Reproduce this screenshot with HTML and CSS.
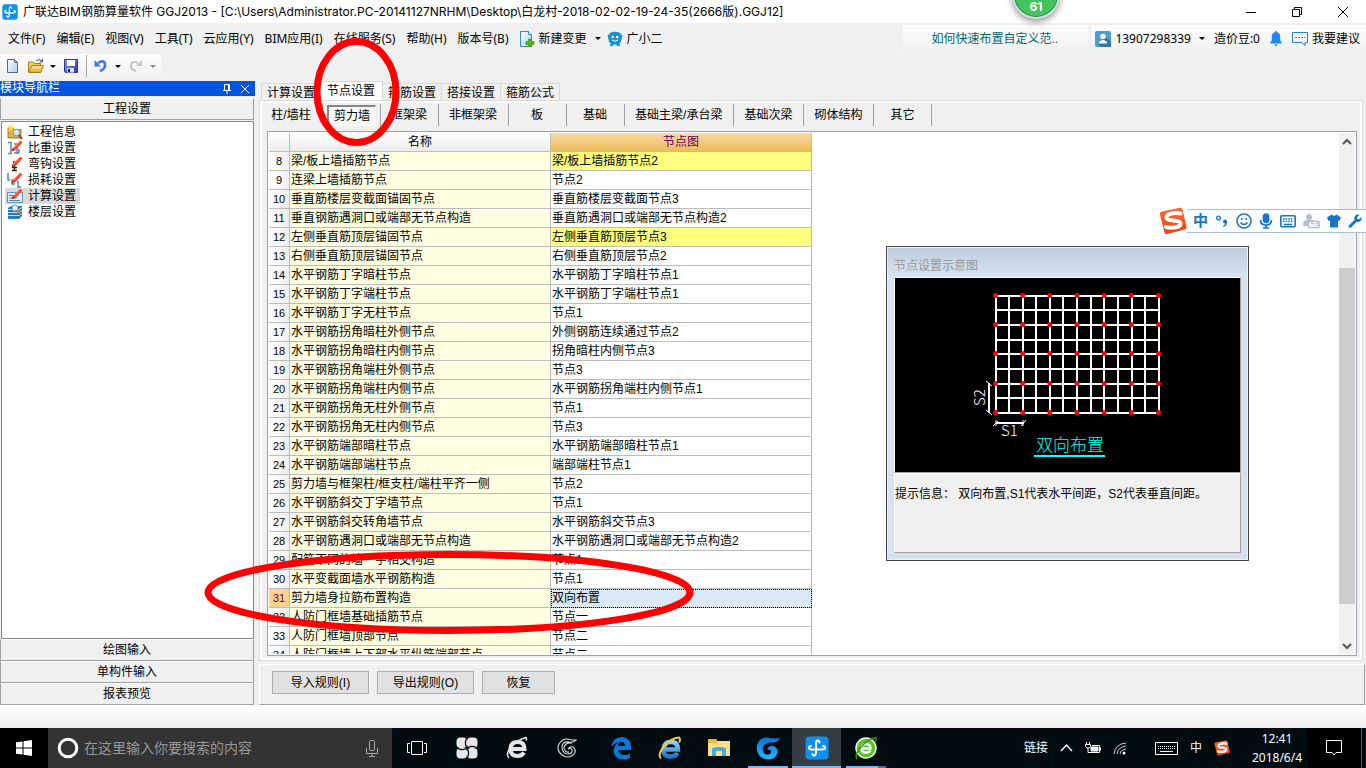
FILE: index.html
```html
<!DOCTYPE html>
<html lang="zh-CN">
<head>
<meta charset="utf-8">
<title>广联达BIM钢筋算量软件 GGJ2013</title>
<link rel="stylesheet" href="styles.css">
</head>
<body>
<svg class="defs" width="0" height="0" aria-hidden="true">
  <defs>
    <linearGradient id="folder" x1="0" y1="0" x2="0" y2="1"><stop offset="0" stop-color="#ffe9a0"/><stop offset="1" stop-color="#e0a52e"/></linearGradient>
    <linearGradient id="sky" x1="0" y1="0" x2="1" y2="1"><stop offset="0" stop-color="#ffffff"/><stop offset="1" stop-color="#a9cdf0"/></linearGradient>
    <linearGradient id="save" x1="0" y1="0" x2="1" y2="1"><stop offset="0" stop-color="#8c9cf0"/><stop offset="1" stop-color="#2a37b0"/></linearGradient>
    <linearGradient id="orange" x1="0" y1="0" x2="0" y2="1"><stop offset="0" stop-color="#ff6a35"/><stop offset="1" stop-color="#f04006"/></linearGradient>
    <linearGradient id="ie" x1="0" y1="0" x2="0" y2="1"><stop offset="0" stop-color="#8fd6ff"/><stop offset="1" stop-color="#1a78d0"/></linearGradient>
    <linearGradient id="swirl" x1="0" y1="0" x2="0" y2="1"><stop offset="0" stop-color="#0a72d8"/><stop offset="1" stop-color="#27b4ff"/></linearGradient>
    <symbol id="anchor" viewBox="0 0 24 24">
      <rect x="0.500" y="0.500" width="23" height="23" rx="4" fill="#0c90f5"/>
      <path d="M14.500 6.500q-.3-2-1.800-2-1.700 0-1.700 2.500V16q0 3.500-2 3.500-1.500 0-1.700-1.500" fill="none" stroke="#fff" stroke-width="1.900" stroke-linecap="round"/>
      <path d="M6 10q-2 .2-2 1.800 0 1.700 2.500 1.700H17q3 0 3-1.700 0-1.600-2-1.800" fill="none" stroke="#fff" stroke-width="1.900" stroke-linecap="round"/>
    </symbol>
    <symbol id="sogou" viewBox="0 0 28 28">
      <path d="M3 4.500 21 .8q2-.3 2.500 1.500L27.500 20q.3 2-1.500 2.600L8 27q-2 .4-2.500-1.500L.8 7q-.3-2 2.200-2.500z" fill="url(#orange)"/>
      <path d="M21.500 6.500C15 5 7 7 7.500 11c.5 3.500 14 1.500 14 5.500 0 4-8 5-14.500 3.500" fill="none" stroke="#fff" stroke-width="4" stroke-linecap="round"/>
    </symbol>
    <symbol id="pencil" viewBox="0 0 16 16">
      <path d="M5.500 8.500 13 0.500l2.500 2L8.500 10 5 11z" fill="#ef4a2c"/><path d="M6.500 8 13 1" stroke="#ffa48c"/><path d="m5.500 8.500-1 3 3.500-1.500z" fill="#8a3a20"/>
    </symbol>
  </defs>
</svg>

<header class="titlebar">
  <svg class="i16" aria-hidden="true"><use href="#anchor"/></svg>
  <h1>广联达BIM钢筋算量软件 GGJ2013 - [C:\Users\Administrator.PC-20141127NRHM\Desktop\白龙村-2018-02-02-19-24-35(2666版).GGJ12]</h1>
  <div class="window-buttons">
    <button type="button" aria-label="最小化"><svg width="12" height="12"><path d="M1 6.500h10" stroke="#000"/></svg></button>
    <button type="button" aria-label="还原"><svg width="12" height="12" fill="none" stroke="#000"><path d="M1.500 3.500h7v7h-7zM3.500 3V1.500h7v7H9"/></svg></button>
    <button type="button" aria-label="关闭"><svg width="12" height="12"><path d="m1 1 10 10M11 1 1 11" stroke="#000"/></svg></button>
  </div>
  <div class="speed-ball">61</div>
</header>

<div class="menubar">
  <nav class="menus" aria-label="主菜单">
    <button type="button">文件(F)</button>
    <button type="button">编辑(E)</button>
    <button type="button">视图(V)</button>
    <button type="button">工具(T)</button>
    <button type="button">云应用(Y)</button>
    <button type="button">BIM应用(I)</button>
    <button type="button">在线服务(S)</button>
    <button type="button">帮助(H)</button>
    <button type="button">版本号(B)</button>
  </nav>
  <div class="menu-extra">
    <button type="button"><svg class="i16" viewBox="0 0 16 16"><path d="M1.500.5h8l3 3v12h-11z" fill="url(#sky)" stroke="#3d86b5"/><path d="M9.500.5v3h3" fill="#fff" stroke="#3d86b5"/><path d="M9.500 8h3v2.500H15v3h-2.500V16h-3v-2.500H7v-3h2.500z" fill="#4fb81e" stroke="#2f8a10" stroke-width=".6"/></svg>新建变更<span class="caret"></span></button>
    <button type="button"><svg class="i16" viewBox="0 0 16 16"><path d="M3 2q5-2.500 10 0l2.500 3-1 3q0 3-2 4l.5 3H10l-.5-1.500h-3L6 15H3l.5-3q-2-1-2-4l-1-3z" fill="#168fe0"/><circle cx="5.800" cy="6" r="1.300" fill="#fff"/><circle cx="10.200" cy="6" r="1.300" fill="#fff"/><path d="M5 9q3 2.500 6 0" stroke="#fff" fill="none"/></svg>广小二</button>
  </div>
  <a class="tip-link" href="#">如何快速布置自定义范..</a>
  <div class="account">
    <button type="button"><svg class="i16" viewBox="0 0 16 16"><rect width="16" height="16" rx="2" fill="#4b9fd0"/><path d="m10 5 6 6v5H6l-3-3z" fill="#2d7aa8"/><circle cx="8" cy="5.500" r="2.800" fill="#fff"/><path d="M4 12.500V11l3-2h2l3 2v1.500z" fill="#fff"/></svg>13907298339<span class="caret"></span></button>
    <span>造价豆:0</span>
    <button type="button" aria-label="通知"><svg width="14" height="16" viewBox="0 0 14 16"><path d="M7 0q1.200 0 1.200 1.200 3 1 3 4.300V9l1.800 3.500H1L2.800 9V5.500q0-3.300 3-4.300Q5.800 0 7 0zM5 13.500h4L7 15.500z" fill="#1e88f5"/></svg></button>
    <button type="button"><svg class="i16" viewBox="0 0 16 16" fill="none" stroke="#2a7fd8"><path d="M.5 1.500h15v10H13v3l-3-3H.5z"/><path d="M3 6.500h10" stroke-dasharray="2 1"/></svg>我要建议</button>
  </div>
</div>

<div class="toolbar">
  <div class="tools">
    <button type="button" aria-label="新建"><svg class="i16" viewBox="0 0 16 16"><path d="M2.500 1.500h7l3 3v10h-10z" fill="url(#sky)" stroke="#51688f"/><path d="M9.500 1.500v3h3" fill="none" stroke="#51688f"/></svg></button>
    <button type="button" aria-label="打开"><svg class="i16" viewBox="0 0 16 16"><path d="M.5 14V4h5l1 1.500h6V8" fill="#f3cf70" stroke="#a87c1a"/><path d="m.7 14.500 3-7h12l-3 7z" fill="url(#folder)" stroke="#a87c1a"/><path d="M8 3q3-3 6 0m.5-2v3h-3" fill="none" stroke="#44546e"/></svg><span class="caret"></span></button>
    <button type="button" aria-label="保存"><svg class="i16" viewBox="0 0 16 16"><path d="M1.500 1.500h13v13h-12l-1-1z" fill="url(#save)" stroke="#2b389f"/><path d="M4 2h8v6H4z" fill="#fff"/><path d="M4 10h7v4.500H4z" fill="#dce2f5"/><path d="M5 11h2v3H5z" fill="#222"/></svg></button>
    <button type="button" class="split" aria-label="撤销"><svg class="i16" viewBox="0 0 16 16"><path d="M5 5q6-4 7 1 .5 5-5 7" fill="none" stroke="#3e78d8" stroke-width="2.600"/><path d="M1.500 2v6.500H8z" fill="#3e78d8"/></svg><span class="caret"></span></button>
    <button type="button" class="dim" aria-label="重做"><svg class="i16" viewBox="0 0 16 16"><path d="M10 5Q4 2 3 7q0 5 5 6" fill="none" stroke="#c4c4c4" stroke-width="2"/><path d="M14 2v6H8z" fill="#c4c4c4"/></svg><span class="caret"></span></button>
  </div>
</div>

<div class="workspace">
  <aside class="sidebar">
    <div class="side-title"><h2>模块导航栏</h2>
      <button type="button" aria-label="固定"><svg width="10" height="10" fill="none" stroke="#fff"><path d="M2.500 6V.5h4V6M6 .5h1.500V6M1 6.500h8M5 7v3"/></svg></button>
      <button type="button" aria-label="关闭"><svg width="10" height="10"><path d="m1 1 8 8M9 1 1 9" stroke="#fff"/></svg></button>
    </div>
    <button type="button" class="module">工程设置</button>
    <ul class="nav-list">
      <li><a href="#"><svg class="i16" viewBox="0 0 16 16"><path d="M1 4h5l1 1.500h7V14H1z" fill="#dcae48" stroke="#8c6a1c" stroke-width=".8"/><path d="M4 0v8M0 4h8M1 1l6 6M7 1 1 7" stroke="#ffdf38"/><circle cx="9.500" cy="8.500" r="3.300" fill="#cfe6fb" stroke="#8698ac"/><path d="m12 11 3 4" stroke="#7b4d20" stroke-width="2"/></svg>工程信息</a></li>
      <li><a href="#"><svg class="i16" viewBox="0 0 16 16"><path d="M1 2.500h3v11H1M7 4h3v9H7M12 9v3q-1 2-2 1" fill="none" stroke="#5c83ba" stroke-width="1.500"/><use href="#pencil"/></svg>比重设置</a></li>
      <li><a href="#"><svg class="i16" viewBox="0 0 16 16"><path d="M6 6h3M7.500 6v8.500M5 14.500h5M5 11.500h5" fill="none" stroke="#222" stroke-width="1.300"/><use href="#pencil"/></svg>弯钩设置</a></li>
      <li><a href="#"><svg class="i16" viewBox="0 0 16 16"><path d="M1 1v7h2M5 7v5h3M11 9v6h3" fill="none" stroke="#5c83ba" stroke-width="1.500"/><use href="#pencil"/></svg>损耗设置</a></li>
      <li><a href="#" class="selected"><svg class="i16" viewBox="0 0 16 16"><path d="M.5 4.500h15v10H.5z" fill="#e4f0ff" stroke="#5c8fd0"/><path d="M2 7.500h5M2 10h8M2 12.500h11" stroke="#5580c0"/><use href="#pencil"/></svg>计算设置</a></li>
      <li><a href="#"><svg class="i16" viewBox="0 0 16 16"><path d="m1 4 3-2h11v10l-3 3H1z" fill="#2a78bd"/><path d="M1 5.500h11l3-2M1 8.500h11l3-2M1 11.500h11l3-2" stroke="#b9e1ff" fill="none"/><circle cx="8" cy="4" r="3" fill="#dcebf8" stroke="#8698ac"/><path d="m10 6 4 4" stroke="#b58235" stroke-width="2"/></svg>楼层设置</a></li>
    </ul>
    <button type="button" class="module">绘图输入</button>
    <button type="button" class="module">单构件输入</button>
    <button type="button" class="module">报表预览</button>
  </aside>

  <main class="content">
    <div class="tabs" role="tablist">
      <button type="button" role="tab">计算设置</button>
      <button type="button" role="tab" class="active" aria-selected="true">节点设置</button>
      <button type="button" role="tab">箍筋设置</button>
      <button type="button" role="tab">搭接设置</button>
      <button type="button" role="tab">箍筋公式</button>
    </div>
    <section class="page">
      <div class="subtabs">
        <button type="button">柱/墙柱</button>
        <button type="button" class="pressed"><span>剪力墙</span></button>
        <button type="button">框架梁</button>
        <button type="button">非框架梁</button>
        <button type="button">板</button>
        <button type="button">基础</button>
        <button type="button">基础主梁/承台梁</button>
        <button type="button">基础次梁</button>
        <button type="button">砌体结构</button>
        <button type="button">其它</button>
      </div>
      <div class="grid-frame">
        <div class="grid-view">
          <table>
            <colgroup><col class="c-no"><col class="c-name"><col class="c-node"></colgroup>
            <thead><tr><th></th><th>名称</th><th class="current">节点图</th></tr></thead>
            <tbody>
              <tr><th>8</th><td>梁/板上墙插筋节点</td><td class="changed">梁/板上墙插筋节点2</td></tr>
              <tr><th>9</th><td>连梁上墙插筋节点</td><td>节点2</td></tr>
              <tr><th>10</th><td>垂直筋楼层变截面锚固节点</td><td>垂直筋楼层变截面节点3</td></tr>
              <tr><th>11</th><td>垂直钢筋遇洞口或端部无节点构造</td><td>垂直筋遇洞口或端部无节点构造2</td></tr>
              <tr><th>12</th><td>左侧垂直筋顶层锚固节点</td><td class="changed">左侧垂直筋顶层节点3</td></tr>
              <tr><th>13</th><td>右侧垂直筋顶层锚固节点</td><td>右侧垂直筋顶层节点2</td></tr>
              <tr><th>14</th><td>水平钢筋丁字暗柱节点</td><td>水平钢筋丁字暗柱节点1</td></tr>
              <tr><th>15</th><td>水平钢筋丁字端柱节点</td><td>水平钢筋丁字端柱节点1</td></tr>
              <tr><th>16</th><td>水平钢筋丁字无柱节点</td><td>节点1</td></tr>
              <tr><th>17</th><td>水平钢筋拐角暗柱外侧节点</td><td>外侧钢筋连续通过节点2</td></tr>
              <tr><th>18</th><td>水平钢筋拐角暗柱内侧节点</td><td>拐角暗柱内侧节点3</td></tr>
              <tr><th>19</th><td>水平钢筋拐角端柱外侧节点</td><td>节点3</td></tr>
              <tr><th>20</th><td>水平钢筋拐角端柱内侧节点</td><td>水平钢筋拐角端柱内侧节点1</td></tr>
              <tr><th>21</th><td>水平钢筋拐角无柱外侧节点</td><td>节点1</td></tr>
              <tr><th>22</th><td>水平钢筋拐角无柱内侧节点</td><td>节点3</td></tr>
              <tr><th>23</th><td>水平钢筋端部暗柱节点</td><td>水平钢筋端部暗柱节点1</td></tr>
              <tr><th>24</th><td>水平钢筋端部端柱节点</td><td>端部端柱节点1</td></tr>
              <tr><th>25</th><td>剪力墙与框架柱/框支柱/端柱平齐一侧</td><td>节点2</td></tr>
              <tr><th>26</th><td>水平钢筋斜交丁字墙节点</td><td>节点1</td></tr>
              <tr><th>27</th><td>水平钢筋斜交转角墙节点</td><td>水平钢筋斜交节点3</td></tr>
              <tr><th>28</th><td>水平钢筋遇洞口或端部无节点构造</td><td>水平钢筋遇洞口或端部无节点构造2</td></tr>
              <tr><th>29</th><td>配筋不同的墙一字相交构造</td><td>节点1</td></tr>
              <tr><th>30</th><td>水平变截面墙水平钢筋构造</td><td>节点1</td></tr>
              <tr><th class="current-row">31</th><td>剪力墙身拉筋布置构造</td><td class="focused">双向布置</td></tr>
              <tr><th>32</th><td>人防门框墙基础插筋节点</td><td>节点一</td></tr>
              <tr><th>33</th><td>人防门框墙顶部节点</td><td>节点二</td></tr>
              <tr><th>34</th><td>人防门框墙上下部水平纵筋端部节点</td><td>节点二</td></tr>
            </tbody>
          </table>
        </div>
        <div class="scrollbar">
          <button type="button" aria-label="向上滚动"><svg width="10" height="8"><path d="m1 6 4-4 4 4" fill="none" stroke="#555" stroke-width="2"/></svg></button>
          <div class="track"><div class="thumb"></div></div>
          <button type="button" aria-label="向下滚动"><svg width="10" height="8"><path d="m1 2 4 4 4-4" fill="none" stroke="#555" stroke-width="2"/></svg></button>
        </div>
      </div>
    </section>
    <div class="actions">
      <button type="button" class="wide">导入规则(I)</button>
      <button type="button" class="wide">导出规则(O)</button>
      <button type="button">恢复</button>
    </div>
  </main>
</div>

<div class="statusbar"></div>

<footer class="taskbar">
  <button type="button" class="start" aria-label="开始"><svg width="16" height="16" fill="#fff"><path d="M0 2.300 6.500 1.400V7.500H0zM7.500 1.200 16 0v7.500H7.500zM0 8.500h6.500v6.100L0 13.700zM7.500 8.500H16V16l-8.500-1.200z"/></svg></button>
  <label class="search">
    <svg width="22" height="22"><circle cx="11" cy="11" r="8.800" fill="none" stroke="#fff" stroke-width="3"/></svg>
    <input type="text" placeholder="在这里输入你要搜索的内容" aria-label="搜索">
    <svg width="12" height="17" fill="none" stroke="#a8a8a8"><rect x="3.500" y=".5" width="5" height="10" rx="1"/><path d="M.5 8v5.500h11V8M6 13.500v3M3 16.500h6"/></svg>
  </label>
  <div class="apps first">
    <button type="button" aria-label="任务视图"><svg width="20" height="14" fill="none" stroke="#fff"><path d="M4.500.5h11v13h-11zM3 2.500H.5v9H3M17 2.500h2.500v9H17"/></svg></button>
    <button type="button" aria-label="应用"><svg width="22" height="22" viewBox="0 0 22 22" fill="#e6e6e6"><rect x=".5" y=".5" width="10.500" height="10.500" rx="4"/><rect x="11" y=".5" width="10.500" height="10.500" rx="4"/><rect x="11" y="11" width="10.500" height="10.500" rx="4"/><rect x=".5" y="11" width="10.500" height="10.500" rx="4"/><path d="M11 11Q7.500 6 11.500 0M11 11q5-3.500 11 .5M11 11q3.500 5-.5 11M11 11q-5 3.500-11-.5" fill="none" stroke="#000c10" stroke-width="1.200"/></svg></button>
    <button type="button" aria-label="浏览器"><svg width="22" height="24" viewBox="0 0 22 24" fill="none"><path d="M5 13h13.500q0-7-7-7t-7 7 7 7q4.500 0 6.500-3.500" stroke="#e6e6e6" stroke-width="4"/><path d="M3 22Q-1 18 5 11T20 1.500q1 1.500 0 3" stroke="#e6e6e6" stroke-width="1.500"/></svg></button>
    <button type="button" aria-label="广联达"><svg width="20" height="20" viewBox="0 0 20 20" fill="none" stroke="#ddd" stroke-width="1.100"><path d="M19 2q-2 3-7 2-7-1-7 6 1 6 6 6 5-.5 4-4-1-3-4-1 3-4 6-1 3 4-1 7-5 4-11 0-6-5-3-11Q6-.5 13 1.500 17 2.500 19 2zM15 5q-7-1-8 5 1 5 5 4"/></svg></button>
  </div>
  <div class="apps second">
    <button type="button" aria-label="Edge"><svg width="22" height="24" viewBox="0 0 22 24"><path d="M1 11Q3 1 12 1q9 1 9 10v3H8q1 5 7 5 3 0 5-1.500V22q-3 1.500-7 1.500-9-.5-9.500-9Q4 9 9 6q-5 1-8 5zm7-1h7q-.2-4-3.500-4T8 10z" fill="#0a78d7"/></svg></button>
    <button type="button" aria-label="Internet Explorer"><svg width="24" height="24" viewBox="0 0 24 24" fill="none"><path d="M6 13.500h14q0-7.500-7-7.500t-7.500 7.500 7.500 7q4.500 0 6.500-3.500" stroke="url(#ie)" stroke-width="4.500"/><path d="M3 22.500Q-1 19 6 10.500T21 1.500q2 1.500 0 5" stroke="#f6ca2b" stroke-width="2"/></svg></button>
    <button type="button" aria-label="文件资源管理器"><svg width="22" height="20" viewBox="0 0 22 20"><path d="M0 1h8l1 2h13v15H0z" fill="#ffe08a"/><path d="M0 1h8l1 2v2H0z" fill="#f0b935"/><path d="M4 18v-8q7-2 14 0v8h-4v-5H8v5z" fill="#3fb0de"/></svg></button>
    <button type="button" class="open" aria-label="广联达平台"><svg width="24" height="24" viewBox="0 0 24 24"><path d="M23.500 2q-1 4-6 4.500Q9 6 7 11q-1 6 3.500 7.500 4.500.5 4.500-3 0-2.500-4-2 2-4.500 6.500-3.500 5 2 4 7-2 6-9 6.500Q2 23 .8 13 .5 2 11 1.500q6 1.500 12.500.5z" fill="url(#swirl)"/></svg></button>
    <button type="button" class="open current-app" aria-label="GGJ2013"><svg width="24" height="24"><use href="#anchor"/></svg></button>
    <button type="button" class="open stacked" aria-label="360浏览器"><svg width="24" height="24" viewBox="0 0 24 24" fill="none"><circle cx="12" cy="12" r="10" fill="#5cc22a" stroke="#effbe7" stroke-width="1.500"/><path d="M8 12.500h8.500q0-4.500-4.500-4.500t-4.500 4.500 4.500 4q3 0 4.500-2" stroke="#fff" stroke-width="2.500"/><path d="M3 23Q0 19 7 11T22 1.500q1 1.500-1 4" stroke="#2f9a17" stroke-width="1.300"/></svg></button>
  </div>
  <div class="tray">
    <span>链接</span>
    <svg width="13" height="8"><path d="m1 7 5.500-6L12 7" fill="none" stroke="#fff" stroke-width="1.300"/></svg>
    <svg width="16" height="12" fill="none" stroke="#fff"><path d="M1.500 0v2M4.500 0v2M.5 2.500h5v2l-1.500 1.500h-2L.5 4.500zM3 6v4.500h11.500v-7H7M15.500 5.500v3"/><path d="M6 5h7v4H6z" fill="#fff"/></svg>
    <svg class="wifi" width="14" height="13" fill="none" stroke="#ccc"><path d="M1 12Q2 2 13 1M4 12q1-7 9-8M7 12q.5-4 6-5"/><circle cx="11" cy="11" r="1.500" fill="#fff" stroke="none"/></svg>
    <svg width="23" height="13" fill="none" stroke="#fff"><path d="M.5.5h22v12H.5zM5 9.500h13"/><path d="M3 4.500h17M3 6.500h17" stroke-dasharray="1 1"/></svg>
    <span class="ime">中</span>
    <svg class="i16" aria-hidden="true"><use href="#sogou"/></svg>
  </div>
  <div class="clock"><time>12:41</time><time>2018/6/4</time></div>
  <button type="button" class="notify" aria-label="操作中心"><svg width="16" height="16"><path d="M.5.500h15v12H10l-2 2.500-2-2.500H.5z" fill="none" stroke="#fff"/></svg></button>
</footer>

<section class="dialog" aria-label="节点设置示意图">
  <h2>节点设置示意图</h2>
  <div class="drawing">
    <svg viewBox="896 279 343 192" aria-label="双向布置">
      <g stroke="#fff" stroke-width="2" fill="none">
        <path d="M996 296h163M996 310h163M996 325h163M996 340h163M996 354h163M996 369h163M996 384h163M996 398h163M996 413h163"/>
        <path d="M996 295v119M1009 296v117M1023 296v117M1036 296v117M1050 296v117M1063 296v117M1077 296v117M1091 296v117M1104 296v117M1118 296v117M1132 296v117M1145 296v117M1159 295v119"/>
        <path d="M989 383v30M996 423h28"/>
        <path d="m986 381 6 5M986 410l6 5M993 426l5-5M1021 426l5-6M996 420v6M1023 420v6" stroke-width="1"/>
      </g>
      <g stroke="#f00" stroke-width="5" stroke-linecap="round" stroke-dasharray="0 27.170">
        <path d="M995.500 295.500h164M995.500 324.500h164M995.500 353.500h164M995.500 383.500h164M995.500 412.500h164"/>
      </g>
      <text x="1001" y="436" class="dim-text">S1</text>
      <text x="0" y="0" transform="translate(985 406) rotate(-90)" class="dim-text">S2</text>
      <text x="1036" y="451" class="caption-text">双向布置</text>
      <path d="M1034 456h71" stroke="#0ff" stroke-width="2"/>
    </svg>
  </div>
  <p>提示信息： 双向布置,S1代表水平间距，S2代表垂直间距。</p>
</section>

<div class="ime-bar">
  <svg class="logo" width="28" height="28"><use href="#sogou"/></svg>
  <div class="ime-tools">
    <button type="button">中</button>
    <button type="button" aria-label="标点"><svg width="14" height="14"><circle cx="3.500" cy="4" r="1.900" fill="none" stroke="#1b74c8" stroke-width="1.300"/><path d="M8 12q2-1 2-2.500-2 0-2-2t2.200-2Q12 5.500 12 8.500t-3.500 4.500z" fill="#1b74c8"/></svg></button>
    <button type="button" aria-label="表情"><svg class="i16" fill="none" stroke="#1b74c8" stroke-width="1.600"><circle cx="8" cy="8" r="7"/><path d="M4.500 9.500q3.500 4 7 0M5.800 5v2M10.200 5v2"/></svg></button>
    <button type="button" aria-label="语音"><svg width="14" height="16" fill="none" stroke="#1b74c8" stroke-width="1.700"><rect x="4.500" y="1" width="5" height="8.500" rx="2.500" fill="#1b74c8"/><path d="M1.500 7q0 5 5.500 5t5.500-5M7 12v3M4 15h6"/></svg></button>
    <button type="button" aria-label="键盘"><svg width="16" height="13" fill="none" stroke="#1b74c8" stroke-width="1.600"><rect x=".8" y=".8" width="14.400" height="11" rx="1"/><path d="M3 4h10M3 6.500h10" stroke-dasharray="1.600 1"/><path d="M4 9.500h8"/></svg></button>
    <button type="button" aria-label="账户"><svg width="17" height="16" viewBox="0 0 17 16"><circle cx="6" cy="4" r="3" fill="#b5bdd6"/><path d="M0 12q0-5 5-5h3q2 0 3 1v5H1z" fill="#b5bdd6"/><rect x="5.500" y="8.500" width="11" height="6" rx="1" fill="#fff" stroke="#b5bdd6" stroke-width="1.300"/><path d="M8 10.500h3v2M13 10.500h2v2h-2" stroke="#b5bdd6" fill="none"/></svg></button>
    <button type="button" aria-label="皮肤"><svg width="14" height="14"><path d="M4.500.5Q7 3 9.500.5L14 3.500 12.500 7 11 6.500v7H3v-7L1.500 7 0 3.500z" fill="#1b74c8"/></svg></button>
    <button type="button" aria-label="工具箱"><svg width="14" height="14"><path d="M.8 11.500 6.500 6Q5.500 2.500 8.500.8q1.500-.8 3 0L9 3.300l.3 1.600 1.700.3L13.500 3q.5 2-.5 3.500-1.500 2-4.500 1.500L3 13.500Q1.500 14 .8 13t0-1.500z" fill="#1b74c8"/></svg></button>
  </div>
</div>

<svg class="mark mark-tab" width="87" height="108" aria-hidden="true"><ellipse cx="43.500" cy="54" rx="39.500" ry="50.500"/></svg>
<svg class="mark mark-row" width="490" height="83" aria-hidden="true"><ellipse cx="245" cy="41.500" rx="241" ry="38"/></svg>
</body>
</html>
```

FILE: styles.css
```css
* { box-sizing: border-box; }

body {
  margin: 0;
  height: 100vh;
  display: flex;
  flex-direction: column;
  position: relative;
  overflow: hidden;
  background: #f0f0f0;
  color: #000;
  font: 12px/16px "Liberation Sans", "Noto Sans CJK SC", sans-serif;
}

button {
  font: inherit;
  color: inherit;
  background: none;
  border: 0;
  padding: 0;
  display: flex;
  align-items: center;
  justify-content: center;
  white-space: nowrap;
}

h1, h2, p, ul { margin: 0; padding: 0; font-size: inherit; font-weight: normal; }
svg { display: block; flex: none; }
.defs { position: absolute; }
.i16 { width: 16px; height: 16px; }

.caret {
  border: 3px solid transparent;
  border-top-color: currentColor;
  border-bottom: 0;
}

/* Title bar */
.titlebar {
  height: 23px;
  flex: none;
  display: flex;
  align-items: center;
  gap: 5px;
  padding-left: 2px;
  background: #fff;
  font-family: Inter, "Noto Sans CJK SC", sans-serif;
  position: relative;
}
.titlebar h1 { flex: 1; white-space: nowrap; }
.window-buttons { display: flex; }
.window-buttons button { width: 46px; height: 20px; }
.speed-ball {
  position: absolute;
  right: 306px;
  top: -29px;
  width: 48px;
  height: 48px;
  border: 2px solid #d9dcdc;
  border-radius: 50%;
  background: #42c45c;
  box-shadow: inset 0 0 0 1px #1c8a4b, 0 3px 6px rgba(0, 0, 0, .4);
  color: #fff;
  text-align: center;
  padding-top: 26px;
  font-weight: bold;
}

/* Menu bar */
.menubar {
  height: 31px;
  flex: none;
  display: flex;
  align-items: center;
  padding-left: 8px;
  font-family: "Noto Sans", "Noto Sans CJK SC", sans-serif;
}
.menus { display: flex; gap: 11px; }
.menu-extra { display: flex; gap: 6px; margin-left: 10px; flex: 1; }
.menu-extra button { gap: 4px; }
.menu-extra .caret { margin-left: 4px; }
.tip-link {
  width: 186px;
  margin-right: 2px;
  padding-left: 28px;
  line-height: 28px;
  color: #006a6a;
  text-decoration: none;
  font-family: "Liberation Sans", "Noto Sans CJK SC", sans-serif;
  background: linear-gradient(#fcfcfc, #f0f0f0);
}
.account {
  display: flex;
  align-items: center;
  gap: 9px;
  height: 28px;
  padding: 0 6px 0 4px;
  background: linear-gradient(#fcfcfc, #f0f0f0);
}
.account button { gap: 4px; }
.account .caret { margin-left: 4px; }

/* Toolbar */
.toolbar { height: 27px; flex: none; }
.tools {
  display: inline-flex;
  align-items: center;
  height: 24px;
  gap: 7px;
  padding: 0 5px;
  background: linear-gradient(#fdfdfd, #f0f0f0);
}
.tools button { gap: 6px; height: 22px; }
.tools .split { border-left: 1px solid #aaa; padding-left: 6px; }
.dim { color: #888; }

/* Workspace */
.workspace { flex: 1; min-height: 0; display: flex; gap: 4px; }

.sidebar { width: 255px; flex: none; display: flex; flex-direction: column; }
.side-title {
  display: flex;
  align-items: center;
  height: 15px;
  flex: none;
  gap: 8px;
  padding-right: 5px;
  margin-bottom: 2px;
  background: #0054e3;
  color: #fff;
}
.side-title h2 { flex: 1; font-size: 12px; line-height: 15px; }
.module {
  height: 22px;
  flex: none;
  margin-right: 1px;
  border: 1px solid #a0a0a0;
  border-top-color: #fff;
}
.nav-list {
  flex: 1;
  margin: 1px 1px 0 1px;
  padding: 2px 3px;
  list-style: none;
  border: 1px solid #828790;
  background: #fff;
}
.nav-list li { display: flex; }
.nav-list a {
  display: flex;
  gap: 5px;
  height: 16px;
  padding: 0 4px 0 2px;
  color: #000;
  text-decoration: none;
}
.nav-list .selected { background: #d9d9d9; }

.content { flex: 1; min-width: 0; display: flex; flex-direction: column; }
.tabs { display: flex; align-items: flex-end; height: 19px; flex: none; padding-left: 2px; }
.tabs button {
  height: 17px;
  padding: 1px 5px 0;
  border: 1px solid #d9d9d9;
  border-width: 1px 1px 0 0;
}
.tabs button:first-child { border-left-width: 1px; padding-right: 4px; }
.tabs .active { height: 19px; padding: 0 7px; background: #fff; }

.page {
  flex: 1;
  min-height: 0;
  display: flex;
  flex-direction: column;
  margin-right: 3px;
  padding: 1px 3px 4px 5px;
  border: 1px solid #d9d9d9;
  box-shadow: inset 0 0 0 2px #fff;
}
.subtabs { display: flex; height: 24px; padding-top: 2px; flex: none; }
.subtabs button {
  min-width: 58px;
  padding: 0 11px 0 10px;
  border-right: 1px solid #a0a0a0;
}
.subtabs button:first-child { padding: 0 11px 0 6px; }
.subtabs .pressed { padding: 0 4px; }
.subtabs .pressed span {
  padding: 1px 5px;
  background: #f8f8f8;
  border: 2px solid #888;
  border-right: 1px solid #fff;
  border-bottom: 1px solid #fff;
}

.grid-frame {
  flex: 1;
  min-height: 0;
  display: flex;
  margin: 5px 2px 0 2px;
  padding: 1px;
  border: 1px solid #a0a0a8;
  background: #fff;
}
.grid-view { flex: 1; overflow: hidden; }
table { border-collapse: separate; border-spacing: 0; table-layout: fixed; width: 543px; }
.c-no { width: 21px; }
.c-name, .c-node { width: 261px; }
th, td {
  height: 19px;
  padding: 0 1px;
  line-height: 18px;
  border-right: 1px solid #bcbcbc;
  border-bottom: 1px solid #bcbcbc;
  font-weight: normal;
  text-align: left;
  white-space: nowrap;
}
th { text-align: center; padding: 0; background: linear-gradient(#fff, #ececee); }
td:nth-child(2) { background: #ffffe1; }
thead .current { background: linear-gradient(#f8dba4, #efb95a); color: #600060; }
tbody th { font-size: 11px; background: linear-gradient(90deg, #fff, #f0f0f2); }
tbody .current-row { background: #ffd28c; color: #600060; }
.changed { background: #ffff80; }
.focused { background: #d9e9f8; outline: 1px dotted #000; outline-offset: -1px; }

.scrollbar { width: 16px; flex: none; display: flex; flex-direction: column; background: #f0f0f0; }
.scrollbar button { height: 17px; flex: none; }
.track { flex: 1; }
.thumb { height: 69%; margin-top: 118px; background: #cdcdcd; }

.actions {
  display: flex;
  align-items: flex-start;
  gap: 8px;
  height: 41px;
  flex: none;
  margin: 3px 1px 0 0;
  padding: 6px 12px;
  border: 1px solid #a0a0a0;
  border-top-color: #fff;
  border-left-color: #fff;
}
.actions button { width: 73px; height: 23px; border: 1px solid #adadad; background: #e1e1e1; }
.actions .wide { width: 97px; }

.statusbar { height: 23px; flex: none; background: linear-gradient(#fff, #f0f0f0); }

/* Floating diagram window */
.dialog {
  position: absolute;
  right: 117px;
  top: 246px;
  width: 363px;
  padding: 8px 7px 7px;
  border: 1px solid #444;
  box-shadow: inset 0 0 0 1px #eef3f9;
  background: linear-gradient(#bccbdb, #d6e2f0 28px);
}
.dialog h2 { color: #999; line-height: 22px; }
.drawing { padding: 1px; background: #000; border: 1px solid; border-color: #fff #a0a0a0 #a0a0a0 #fff; }
.drawing svg { width: 100%; }
.dialog p {
  height: 80px;
  padding-top: 12px;
  background: #f0f0f0;
  border: 1px solid;
  border-color: #fff #a0a0a0 #a0a0a0 #fff;
  white-space: nowrap;
}
.dim-text { fill: #fff; font: 15px "Noto Sans CJK SC", sans-serif; font-weight: 300; }
.caption-text { fill: #0ff; font: 17px "Noto Sans CJK SC", sans-serif; font-weight: 300; }

/* Input method bar */
.ime-bar { position: absolute; right: 0; top: 207px; display: flex; align-items: center; }
.ime-tools {
  display: flex;
  align-items: center;
  gap: 7px;
  height: 24px;
  padding: 0 4px 0 6px;
  border: 1px solid #a9bfd4;
  border-width: 1px 0;
  background: #fbfdff;
  color: #1b74c8;
  font-size: 15px;
  font-weight: bold;
}

/* Taskbar */
.taskbar { height: 40px; flex: none; display: flex; background: #000c10; color: #fff; font-family: "Noto Sans", "Noto Sans CJK SC", sans-serif; }
.start { width: 48px; background: #000; }
.search { width: 344px; display: flex; align-items: center; gap: 5px; padding: 0 14px 0 9px; background: #333; }
.search input {
  flex: 1;
  min-width: 0;
  padding: 0;
  border: 0;
  background: none;
  color: #fff;
  font: 14px/20px "Noto Sans", "Noto Sans CJK SC", sans-serif;
}
.search input::placeholder { color: #999; opacity: 1; }
.apps { display: flex; }
.first button { width: 50px; }
.second { margin-left: 4px; flex: 1; }
.second button { width: 49px; border-bottom: 2px solid transparent; border-top: 2px solid transparent; }
.second .open {
  background: linear-gradient(#80b8f5, #80b8f5) 50% 100% / 40px 2px no-repeat border-box;
}
.second .current-app {
  background: linear-gradient(#80b8f5, #80b8f5) 50% 100% / 100% 2px no-repeat border-box, #343e42 border-box;
}
.second .stacked {
  background: linear-gradient(90deg, #80b8f5 32px, #4f7299 32px) 50% 100% / 40px 2px no-repeat border-box;
}
.tray { display: flex; align-items: center; gap: 12px; padding-right: 17px; }
.wifi { margin-right: 16px; }
.clock { display: flex; flex-direction: column; justify-content: center; align-items: center; width: 60px; line-height: 19px; }
.notify { width: 55px; background: #000; border-right: 1px solid #555; margin-right: 4px; }

/* Red annotations */
.mark { position: absolute; fill: none; stroke: #f00; stroke-width: 7; }
.mark-tab { left: 313px; top: 38px; }
.mark-row { left: 204px; top: 551px; }
```
